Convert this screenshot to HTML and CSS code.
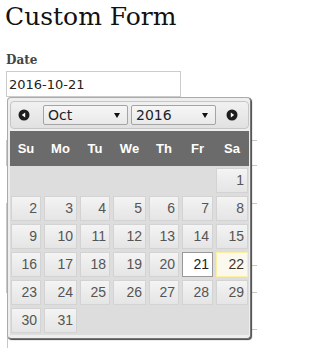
FILE: index.html
```html
<!DOCTYPE html>
<html lang="en">
<head>
<meta charset="utf-8">
<title>Custom Form</title>
<link rel="stylesheet" href="styles.css">
</head>
<body>
<div class="page">
  <h1 class="title">Custom Form</h1>
  <div class="field">
    <label class="label" for="date">Date</label>
    <input class="input" id="date" type="text" value="2016-10-21">
    <div class="ghosts">
      <div class="ghost g1"></div>
      <div class="ghost g2"></div>
      <div class="ghost g3"></div>
      <div class="ghost g4"></div>
    </div>
    <div class="datepicker">
      <div class="dp-header">
        <svg class="dp-nav dp-prev" width="12" height="12" viewBox="0 0 12 12"><circle cx="6" cy="6" r="5.5" fill="#1e1e1e"/><polygon points="3.8,6 7.2,3.6 7.2,8.4" fill="#fff"/></svg>
        <div class="dp-select dp-month"><span>Oct</span><i class="caret"></i></div>
        <div class="dp-select dp-year"><span>2016</span><i class="caret"></i></div>
        <svg class="dp-nav dp-next" width="12" height="12" viewBox="0 0 12 12"><circle cx="6" cy="6" r="5.5" fill="#1e1e1e"/><polygon points="8.2,6 4.8,3.6 4.8,8.4" fill="#fff"/></svg>
      </div>
      <div class="dp-week">
        <span>Su</span><span>Mo</span><span>Tu</span><span>We</span><span>Th</span><span>Fr</span><span>Sa</span>
      </div>
      <div class="dp-days">
        <span class="d first">1</span>
        <span class="d">2</span><span class="d">3</span><span class="d">4</span><span class="d">5</span><span class="d">6</span><span class="d">7</span><span class="d">8</span>
        <span class="d">9</span><span class="d">10</span><span class="d">11</span><span class="d">12</span><span class="d">13</span><span class="d">14</span><span class="d">15</span>
        <span class="d">16</span><span class="d">17</span><span class="d">18</span><span class="d">19</span><span class="d">20</span><span class="d active">21</span><span class="d today">22</span>
        <span class="d">23</span><span class="d">24</span><span class="d">25</span><span class="d">26</span><span class="d">27</span><span class="d">28</span><span class="d">29</span>
        <span class="d">30</span><span class="d">31</span>
      </div>
    </div>
  </div>
</div>
</body>
</html>
```
FILE: styles.css
```css
html {
  overflow: hidden;
}
body {
  margin: 0;
  background: #fff;
}
.page {
  width: 251px;
  padding-left: 6px;
}
.title {
  margin: 0 0 0 -1px;
  padding-top: 1px;
  font-family: "DejaVu Serif", serif;
  font-weight: normal;
  font-size: 25px;
  line-height: 31px;
  color: #111;
}
.field {
  position: relative;
  margin-top: 20px;
}
.label {
  display: block;
  font-family: "DejaVu Serif", serif;
  font-weight: bold;
  font-size: 12px;
  line-height: 16px;
  color: #444;
}
.input {
  display: block;
  box-sizing: border-box;
  margin: 3px 0 0;
  width: 175px;
  height: 26px;
  border: 1px solid #ccc;
  border-radius: 0;
  padding: 0 2px;
  font-family: "DejaVu Sans", sans-serif;
  font-size: 13px;
  color: #222;
  background: #fff;
  outline: none;
}
.ghosts {
  width: 251px;
}
.ghost {
  box-sizing: border-box;
  width: 100%;
  border: 1px solid #c8c8c8;
  border-right: none;
}
.g1 {
  margin-top: 43px;
  height: 26px;
}
.g2 {
  margin-top: 37px;
  height: 62px;
  border-bottom: none;
}
.g3 {
  height: 28px;
}
.g4 {
  margin-top: 36px;
  margin-left: 1px;
  width: 250px;
  height: 19px;
  border-bottom: none;
}
.datepicker {
  position: absolute;
  top: 45px;
  left: 1px;
  width: 239px;
  padding: 3px 1px 3px 2px;
  border: 1px solid #aaa;
  border-right-color: #777;
  border-bottom-color: #777;
  border-radius: 4px;
  background: #eee;
  box-shadow: 1px 1px 1px #444;
}
.dp-header {
  box-sizing: border-box;
  display: flex;
  align-items: center;
  height: 28px;
  margin-bottom: 2px;
  border: 1px solid #c6c6c6;
  border-radius: 4px;
  background: linear-gradient(#f1f1f1, #e1e1e1);
}
.dp-nav {
  display: block;
  flex: none;
}
.dp-prev {
  margin-left: 7px;
}
.dp-next {
  margin-left: 10px;
}
.dp-select {
  box-sizing: border-box;
  display: flex;
  align-items: center;
  justify-content: space-between;
  width: 85px;
  height: 20px;
  padding: 0 7px 0 4px;
  border: 1px solid #a4a4a4;
  border-radius: 2px;
  background: linear-gradient(#f6f6f6, #e9e9e9);
  font-family: "DejaVu Sans", sans-serif;
  font-size: 14px;
  line-height: 18px;
  color: #1e1e28;
}
.dp-month {
  margin-left: 13px;
}
.dp-year {
  margin-left: 3px;
}
.caret {
  display: block;
  width: 0;
  height: 0;
  border-left: 3px solid transparent;
  border-right: 3px solid transparent;
  border-top: 5px solid #111;
}
.dp-week {
  display: grid;
  grid-template-columns: 30px 33px 30px 33px 30px 31px 32px;
  column-gap: 3px;
  height: 35px;
  padding: 0 1px;
  background: #6b6b6b;
  align-items: center;
  font-family: "Liberation Sans", Arial, sans-serif;
  font-weight: bold;
  font-size: 13px;
  color: #fff;
  text-align: center;
}
.dp-days {
  display: grid;
  grid-template-columns: 30px 33px 30px 33px 30px 31px 32px;
  grid-auto-rows: 25px;
  gap: 3px;
  padding: 2px 1px;
  background: #dddddd;
}
.d {
  box-sizing: border-box;
  border: 1px solid #d3d3d3;
  background: linear-gradient(#f4f4f4 0%, #ececec 50%, #e5e5e5 100%);
  padding-right: 3px;
  text-align: right;
  font-family: "Liberation Sans", Arial, sans-serif;
  font-size: 14px;
  line-height: 23px;
  color: #555;
}
.d.first {
  grid-column-start: 7;
}
.d.active {
  background: #fff;
  border-color: #999;
  color: #212121;
}
.d.today {
  background: #fbf9ee;
  border-color: #fcefa1;
  color: #363636;
}
```
